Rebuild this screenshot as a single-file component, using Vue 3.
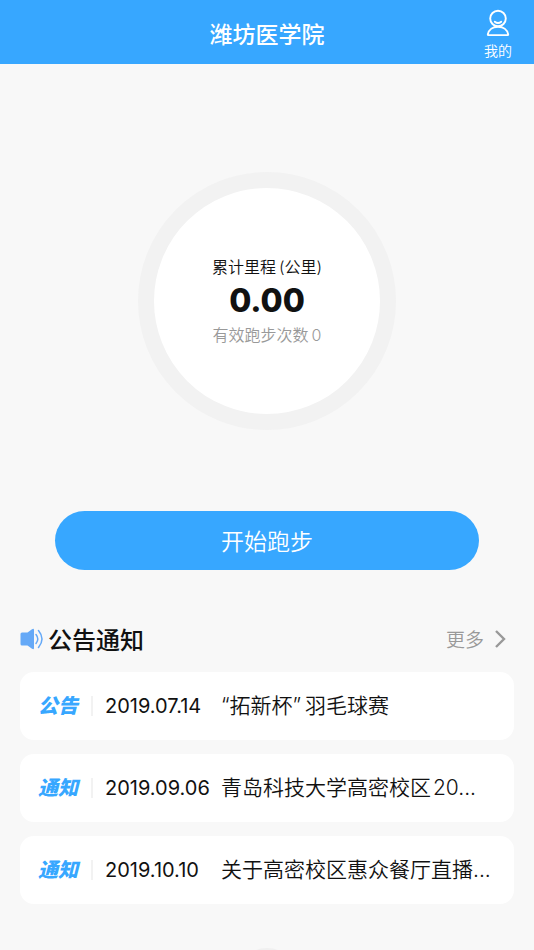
<script setup>
import { ref } from "vue";

const school = ref("潍坊医学院");
const mileage = ref("0.00");
const runCount = ref(0);

// 公告列表
const notices = ref([
  { id: 1, type: "公告", date: "2019.07.14", title: "“拓新杯”\u2009羽毛球赛" },
  { id: 2, type: "通知", date: "2019.09.06", title: "青岛科技大学高密校区\u200A20..." },
  { id: 3, type: "通知", date: "2019.10.10", title: "关于高密校区惠众餐厅直播..." },
]);
</script>

<template>
  <div class="home">
    <header class="navbar">
      <h1 class="navbar-title">{{ school }}</h1>
      <a href="#mine" class="mine">
        <svg class="mine-icon" viewBox="0 0 24 28" fill="none" stroke="currentColor" stroke-width="1.9">
          <circle cx="12" cy="9.5" r="7.8" />
          <path d="M8.8 12.700q3.200 2.800 6.400 0" stroke-linecap="round" />
          <path d="M1.8 25.500C2.6 20.500 7 17.700 12 17.700s9.400 2.800 10.200 7.800q0 .6-.6.6H2.400q-.6 0-.6-.6z" stroke-linejoin="round" />
        </svg>
        <span>我的</span>
      </a>
    </header>

    <main class="content">
      <!-- 累计里程圆环 -->
      <section class="ring">
        <p class="ring-label">累计里程&#8201;(公里)</p>
        <p class="ring-value">{{ mileage }}</p>
        <p class="ring-count">有效跑步次数&#8201;{{ runCount }}</p>
      </section>

      <button type="button" class="start-btn">开始跑步</button>

      <!-- 公告通知 -->
      <section class="notice">
        <div class="notice-head">
          <svg class="speaker" viewBox="0 0 24 22">
            <path d="M2 4.500h5.500L12 1.200Q14 0 14 2v18q0 2-2 .8L7.500 17.500H2Q.5 17.500 .5 16V6Q.5 4.500 2 4.500z" fill="#65a9f7" />
            <path d="M16 6.500q3.600 4.500 0 9M18.500 2.500q7 8.500 0 17" fill="none" stroke="#65a9f7" stroke-width="1.500" stroke-linecap="round" />
          </svg>
          <h2 class="notice-title">公告通知</h2>
          <a href="#more" class="more">
            <span class="more-text">更多</span>
            <svg class="arrow" viewBox="0 0 12 18" fill="none" stroke="currentColor" stroke-width="2.400">
              <path d="M2 1L10 9L2 17" />
            </svg>
          </a>
        </div>
        <ul class="notice-list">
          <li v-for="item in notices" :key="item.id">
            <a :href="'#notice-' + item.id" class="notice-item">
              <span class="tag">{{ item.type }}</span>
              <span class="date">{{ item.date }}</span>
              <span class="title">{{ item.title }}</span>
            </a>
          </li>
        </ul>
      </section>
    </main>

    <!-- 底部收起的悬浮圆 -->
    <div class="float-dot"></div>
  </div>
</template>

<style>
body {
  margin: 0;
  background-color: #f8f8f8;
}
</style>

<style scoped>
.home {
  min-height: 100vh;
  background-color: #f8f8f8;
  color: #111;
  font-family: Inter, "Noto Sans CJK SC", sans-serif;
}

h1, h2, p, ul {
  margin: 0;
  padding: 0;
}

a {
  color: inherit;
  text-decoration: none;
}

.navbar {
  display: grid;
  grid-template-columns: 1fr auto 1fr;
  align-items: center;
  height: 64px;
  padding: 0 22px;
  background-color: #37a7ff;
  color: #fff;
}

.navbar-title {
  grid-column: 2;
  padding-top: 6px;
  font-size: 23px;
  line-height: 32px;
  font-weight: 500;
}

.mine {
  display: flex;
  flex-direction: column;
  align-items: center;
  justify-self: end;
  gap: 4px;
  padding-top: 6px;
  font-size: 14px;
  line-height: 20px;
  font-weight: 350;
}

.mine-icon {
  width: 24px;
  height: 28px;
}

.content {
  display: flex;
  flex-direction: column;
  align-items: center;
  padding: 108px 20px 40px;
}

.ring {
  display: flex;
  flex-direction: column;
  align-items: center;
  justify-content: center;
  box-sizing: border-box;
  width: 258px;
  height: 258px;
  border: 16px solid #f2f2f2;
  border-radius: 50%;
  background-color: #fff;
}

.ring-label, .ring-count {
  font-size: 16px;
  line-height: 24px;
  font-weight: 350;
}

.ring-value {
  font-size: 32px;
  line-height: 44px;
  font-weight: 800;
}

.ring-count {
  color: #999;
}

.start-btn {
  width: 86%;
  height: 59px;
  margin-top: 81px;
  padding: 0 0 2px;
  border: none;
  border-radius: 30px;
  background-color: #37a7ff;
  color: #fff;
  font-family: inherit;
  font-size: 23px;
  font-weight: 350;
  cursor: pointer;
}

.notice {
  width: 100%;
  margin-top: 50px;
}

.notice-head {
  display: flex;
  align-items: center;
  height: 38px;
  padding-right: 8px;
}

.speaker {
  width: 24px;
  height: 22px;
}

.notice-title {
  margin-left: 4px;
  padding-bottom: 2px;
  font-size: 24px;
  font-weight: 500;
}

.more {
  display: flex;
  align-items: center;
  gap: 10px;
  margin-left: auto;
  color: #999;
  font-size: 19px;
}

.more-text {
  padding-bottom: 2px;
  font-weight: 350;
}

.arrow {
  width: 12px;
  height: 18px;
}

.notice-list {
  display: flex;
  flex-direction: column;
  gap: 14px;
  margin-top: 14px;
  list-style: none;
}

.notice-item {
  display: flex;
  align-items: center;
  height: 68px;
  padding: 0 18px;
  border-radius: 14px;
  background-color: #fff;
  font-size: 20px;
}

.tag {
  padding-right: 13px;
  border-right: 2px solid #f2f2f2;
  color: #37a7ff;
  line-height: 20px;
  font-weight: 900;
  font-style: italic;
}

.date {
  width: 116px;
  margin-left: 12px;
}

.title {
  flex: 1;
  min-width: 0;
  padding-bottom: 4px;
  overflow: hidden;
  white-space: nowrap;
  font-size: 21px;
  font-weight: 350;
}

.float-dot {
  position: fixed;
  bottom: -62px;
  left: 50%;
  width: 64px;
  height: 64px;
  margin-left: -32px;
  border-radius: 50%;
  background-color: #f0f0f0;
}
</style>
